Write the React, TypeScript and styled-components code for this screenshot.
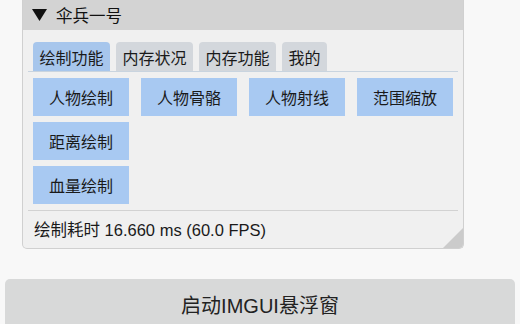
import React from 'react'
import styled, { createGlobalStyle } from 'styled-components'

const GlobalStyle = createGlobalStyle`
  html, body {
    margin: 0;
    padding: 0;
    background: #f8f8f8;
    font-family: "Liberation Sans", "Noto Sans CJK SC", sans-serif;
    color: #1a1a1a;
  }
`

const Page = styled.div`
  width: 520px;
  height: 324px;
  overflow: hidden;
  display: flex;
  flex-direction: column;
`

const Window = styled.section`
  position: relative;
  flex-shrink: 0;
  margin-left: 22px;
  width: 442px;
  height: 249px;
  box-sizing: border-box;
  background: #f0f0f0;
  border: 1px solid #d0d0d0;
  border-top: none;
  border-radius: 0 0 5px 5px;
  display: flex;
  flex-direction: column;
`

const TitleBar = styled.div`
  height: 30px;
  background: #d3d3d3;
  display: flex;
  align-items: center;
  padding-left: 9px;
  gap: 9px;
  font-size: 16.5px;
  color: #111;
`

const Body = styled.div`
  padding: 12px 5px 0 5px;
  display: flex;
  flex-direction: column;
  flex: 1;
`

const TabBar = styled.div`
  display: flex;
  gap: 6px;
  padding-left: 5px;
  border-bottom: 1px solid #c9d4df;
`

const Tab = styled.div<{ $active?: boolean }>`
  height: 29px;
  box-sizing: border-box;
  padding: 0 6.5px;
  display: flex;
  align-items: center;
  font-size: 16px;
  border-radius: 4px 4px 0 0;
  background: ${(p) => (p.$active ? '#a7c6ec' : '#d3d7dc')};
`

const Rows = styled.div`
  display: flex;
  flex-direction: column;
  gap: 6px;
  padding: 6px 0 6px 5px;
`

const Row = styled.div`
  display: flex;
  gap: 12px;
`

const Btn = styled.div`
  width: 96px;
  height: 38px;
  background: #a8c9f2;
  display: flex;
  align-items: center;
  justify-content: center;
  font-size: 16px;
`

const Footer = styled.div`
  border-top: 1px solid #d2d2d2;
  padding: 0 0 2px 6px;
  flex: 1;
  display: flex;
  align-items: center;
  font-size: 16.5px;
`

const Grip = styled.svg`
  position: absolute;
  right: 0;
  bottom: 0;
`

const Launch = styled.button`
  margin: 30px 5px 0 5px;
  height: 52px;
  flex-shrink: 0;
  border: none;
  border-radius: 5px;
  background: #d8d9d9;
  font-family: inherit;
  font-size: 20px;
  color: #222;
  padding: 0 0 2px 0;
`

const tabs = ['绘制功能', '内存状况', '内存功能', '我的']
const rows = [
  ['人物绘制', '人物骨骼', '人物射线', '范围缩放'],
  ['距离绘制'],
  ['血量绘制'],
]

export default function App() {
  return (
    <Page>
      <GlobalStyle />
      <Window>
        <TitleBar>
          <svg width="15" height="12" viewBox="0 0 15 12">
            <polygon points="0,0 15,0 7.5,12" fill="#111" />
          </svg>
          <span>伞兵一号</span>
        </TitleBar>
        <Body>
          <TabBar>
            {tabs.map((t, i) => (
              <Tab key={t} $active={i === 0}>{t}</Tab>
            ))}
          </TabBar>
          <Rows>
            {rows.map((r, i) => (
              <Row key={i}>
                {r.map((b) => (
                  <Btn key={b}>{b}</Btn>
                ))}
              </Row>
            ))}
          </Rows>
          <Footer>绘制耗时 16.660 ms (60.0 FPS)</Footer>
        </Body>
        <Grip width="20" height="20" viewBox="0 0 20 20">
          <path d="M20 0 L20 16 Q20 20 16 20 L0 20 Z" fill="#cbcbcb" />
        </Grip>
      </Window>
      <Launch>启动IMGUI悬浮窗</Launch>
    </Page>
  )
}
